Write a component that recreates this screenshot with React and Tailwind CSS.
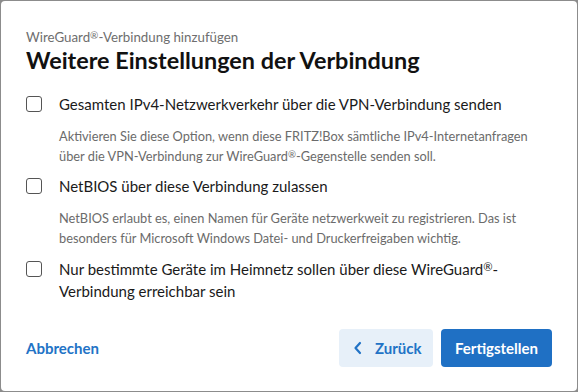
import React from "react";

function Checkbox() {
  return <span className="mt-[3px] block h-[16px] w-[16px] shrink-0 rounded-[3px] border border-[#555] bg-white" />;
}

function R() {
  return <span className="relative top-[-0.35em] text-[0.75em] leading-[0]">®</span>;
}

export default function App() {
  const font = { fontFamily: "Lato, 'Noto Sans', sans-serif" };
  return (
    <div className="h-[392px] w-[578px] overflow-hidden bg-[#8c8c8c] p-[1px]" style={font}>
      <div className="flex h-full w-full flex-col rounded-[4px] bg-white pl-[25px] pr-[24px]">
        <div className="mt-[26px] whitespace-nowrap text-[13.3px] leading-[20px] text-[#6e6e6e]">WireGuard<R />-Verbindung hinzufügen</div>
        <div className="mt-[-2px] whitespace-nowrap text-[23.4px] font-bold leading-[30px] text-[#111]">Weitere Einstellungen der Verbindung</div>

        <div className="mt-[18px] flex gap-[17px]">
          <Checkbox />
          <div className="whitespace-nowrap text-[15px] leading-[22px] text-[#1a1a1a]">Gesamten IPv4-Netzwerkverkehr über die VPN-Verbindung senden</div>
        </div>
        <div className="mt-[11px] whitespace-nowrap pl-[33px] text-[12.8px] leading-[20px] text-[#6b6b6b]">
          Aktivieren Sie diese Option, wenn diese FRITZ!Box sämtliche IPv4-Internetanfragen<br />
          über die VPN-Verbindung zur WireGuard<R />-Gegenstelle senden soll.
        </div>

        <div className="mt-[9px] flex gap-[17px]">
          <Checkbox />
          <div className="whitespace-nowrap text-[15px] leading-[22px] text-[#1a1a1a]">NetBIOS über diese Verbindung zulassen</div>
        </div>
        <div className="mt-[11px] whitespace-nowrap pl-[33px] text-[12.8px] leading-[20px] text-[#6b6b6b]">
          NetBIOS erlaubt es, einen Namen für Geräte netzwerkweit zu registrieren. Das ist<br />
          besonders für Microsoft Windows Datei- und Druckerfreigaben wichtig.
        </div>

        <div className="mt-[10px] flex gap-[17px]">
          <Checkbox />
          <div className="whitespace-nowrap text-[15px] leading-[22px] text-[#1a1a1a]">
            Nur bestimmte Geräte im Heimnetz sollen über diese WireGuard<R />-<br />
            Verbindung erreichbar sein
          </div>
        </div>

        <div className="mt-[27px] flex items-center">
          <button className="text-[15px] font-bold text-[#2273c6]">Abbrechen</button>
          <div className="ml-auto mr-[1px] flex gap-[8px]">
            <button className="flex h-[38px] w-[94px] items-center gap-[12px] rounded-[4px] bg-[#e7f0f9] pl-[14px] text-[15px] font-bold text-[#2273c6]">
              <svg width="10" height="14" viewBox="0 0 10 14" fill="none" stroke="currentColor" strokeWidth="2.2" strokeLinecap="round" strokeLinejoin="round">
                <path d="M7 2 L2.5 7 L7 12" />
              </svg>
              Zurück
            </button>
            <button className="h-[38px] w-[111px] rounded-[4px] bg-[#1f70c4] text-[15px] font-bold text-white">Fertigstellen</button>
          </div>
        </div>
      </div>
    </div>
  );
}
